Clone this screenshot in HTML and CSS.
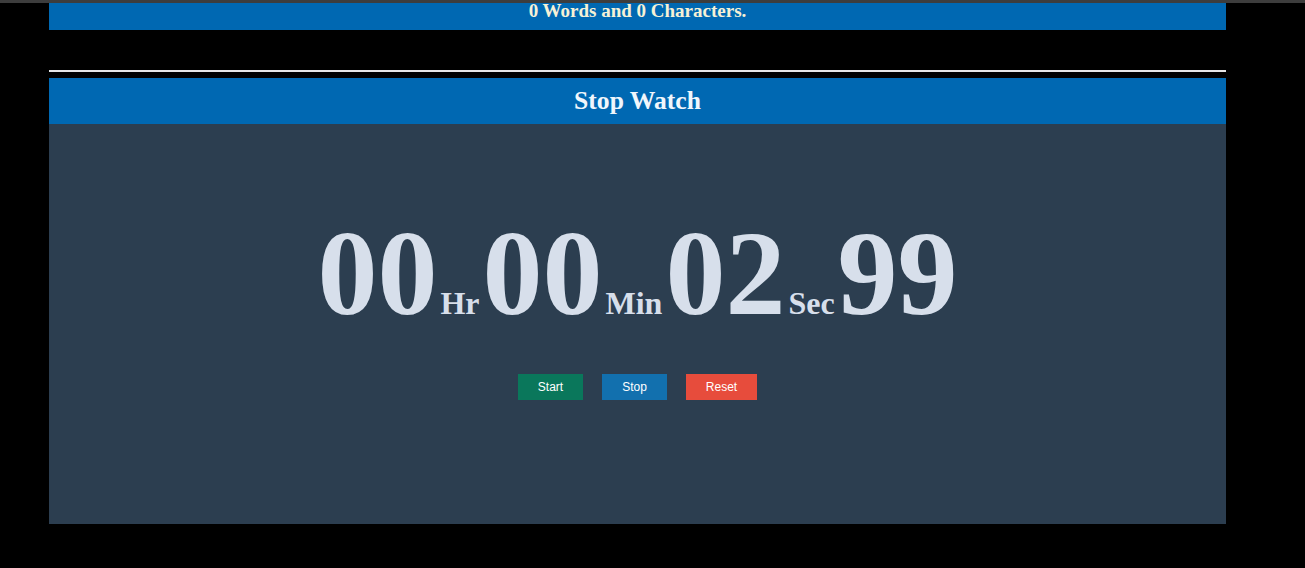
FILE: index.html
```html
<!DOCTYPE html>
<html>
<head>
<meta charset="utf-8">
<title>Stop Watch</title>
<link rel="stylesheet" href="styles.css">
</head>
<body>
<div class="topstrip"></div>
<div class="wrap">
  <div class="counter"><p class="counter-text">0 Words and 0 Characters.</p></div>
  <hr class="divider">
  <h2 class="sw-title">Stop Watch</h2>
  <div class="sw-panel">
    <div class="time"><span class="num">00</span><span class="unit">Hr</span><span class="num">00</span><span class="unit">Min</span><span class="num">02</span><span class="unit">Sec</span><span class="num">99</span></div>
    <div class="controls">
      <button class="btn btn-start">Start</button>
      <button class="btn btn-stop">Stop</button>
      <button class="btn btn-reset">Reset</button>
    </div>
  </div>
</div>
</body>
</html>
```
FILE: styles.css
```css
html, body {
  margin: 0;
  padding: 0;
  background: #000;
}
body {
  font-family: "Liberation Serif", "Times New Roman", serif;
  height: 568px;
  overflow: hidden;
}
.topstrip {
  height: 3px;
  background: #3d3d3d;
}
.wrap {
  width: 1177px;
  margin-left: 49px;
}
.counter {
  height: 27px;
  background: #0068b2;
  text-align: center;
}
.counter-text {
  margin: 0;
  position: relative;
  top: -2px;
  font-size: 19px;
  line-height: 19px;
  font-weight: bold;
  color: #f6f1d6;
}
.divider {
  margin: 40px 0 0 0;
  height: 2px;
  border: none;
  background: #e6e6e6;
}
.sw-title {
  margin: 6px 0 0 0;
  height: 46px;
  line-height: 46px;
  font-size: 25.6px;
  font-weight: bold;
  text-align: center;
  color: #f0f6fc;
  background: #0068b2;
}
.sw-panel {
  height: 400px;
  box-sizing: border-box;
  padding-top: 90px;
  background: #2c3e50;
  color: #d7dfeb;
}
.time {
  text-align: center;
  font-weight: bold;
  line-height: 120px;
  height: 120px;
  white-space: nowrap;
}
.num {
  font-size: 120px;
}
.unit {
  font-size: 32px;
  line-height: 1;
  margin: 0 3px;
}
.controls {
  margin-top: 40px;
  display: flex;
  justify-content: center;
  gap: 19px;
}
.btn {
  height: 26px;
  padding: 0 20px;
  border: none;
  border-radius: 0;
  font-family: "Liberation Sans", Arial, sans-serif;
  font-size: 12px;
  color: #fff;
  cursor: pointer;
}
.btn-start { background: #0a775b; }
.btn-stop { background: #1270ae; }
.btn-reset { background: #e74c3c; }
```
